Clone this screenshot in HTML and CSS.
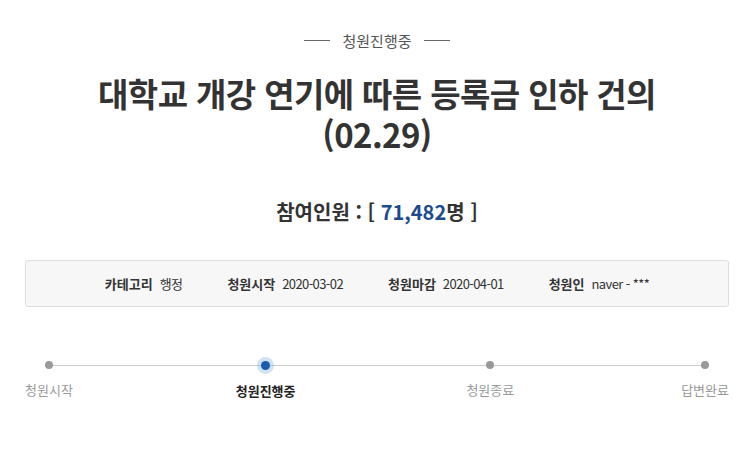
FILE: index.html
```html
<!DOCTYPE html>
<html lang="ko">
<head>
<meta charset="utf-8">
<link rel="stylesheet" href="styles.css">
</head>
<body>
<div class="page">
  <div class="status"><span class="dash"></span><span>청원진행중</span><span class="dash"></span></div>
  <h1 class="title">대학교 개강 연기에 따른 등록금 인하 건의<br>(02.29)</h1>
  <p class="count">참여인원 : [ <span class="num">71,482</span>명 ]</p>
  <ul class="info">
    <li><b>카테고리</b><span>행정</span></li>
    <li><b>청원시작</b><span>2020-03-02</span></li>
    <li><b>청원마감</b><span>2020-04-01</span></li>
    <li><b>청원인</b><span>naver - ***</span></li>
  </ul>
  <div class="progress">
    <div class="step"><i class="dot"></i><span>청원시작</span></div>
    <div class="step active"><i class="dot"></i><span>청원진행중</span></div>
    <div class="step"><i class="dot"></i><span>청원종료</span></div>
    <div class="step"><i class="dot"></i><span>답변완료</span></div>
  </div>
</div>
</body>
</html>
```
FILE: styles.css
```css
html, body { margin: 0; padding: 0; background: #fff; }
body { font-family: "Noto Sans CJK KR", "Noto Sans", sans-serif; color: #333; }
.page { padding: 28px 26px 0 25px; }
.status { display: flex; justify-content: center; align-items: center; gap: 12px; font-size: 15px; color: #555; height: 24px; }
.dash { width: 26px; height: 1px; background: #666; }
.title { margin: 21px 0 0; text-align: center; font-size: 33px; font-weight: 700; line-height: 41px; color: #333; letter-spacing: -0.6px; }
.count { margin: 42px 0 0; text-align: center; font-size: 20px; font-weight: 700; line-height: 30px; color: #333; }
.num { color: #1c4a8c; }
.info { list-style: none; margin: 33px 0 0; padding: 0; height: 45px; border: 1px solid #ddd; border-radius: 3px; background: #f7f7f7; display: flex; justify-content: center; align-items: center; gap: 45px; font-size: 13px; color: #333; }
.info li { display: flex; gap: 7px; align-items: center; }
.info b { font-weight: 700; }
.info span { letter-spacing: -0.6px; }
.progress { margin-top: 54px; display: flex; justify-content: space-between; position: relative; }
.progress::before { content: ""; position: absolute; left: 22px; right: 22px; top: 4px; height: 1px; background: #ccc; }
.step { display: flex; flex-direction: column; align-items: center; position: relative; }
.dot { width: 8px; height: 8px; border-radius: 50%; background: #999; display: block; }
.step.active { left: -4px; }
.step.active .dot { width: 9px; height: 9px; margin-top: -0.5px; background: #1a5bb0; box-shadow: 0 0 0 4px rgba(120,170,230,0.35); }
.step span { margin-top: 11px; font-size: 13px; color: #999; line-height: 20px; }
.step.active span { color: #222; font-weight: 700; }
```
